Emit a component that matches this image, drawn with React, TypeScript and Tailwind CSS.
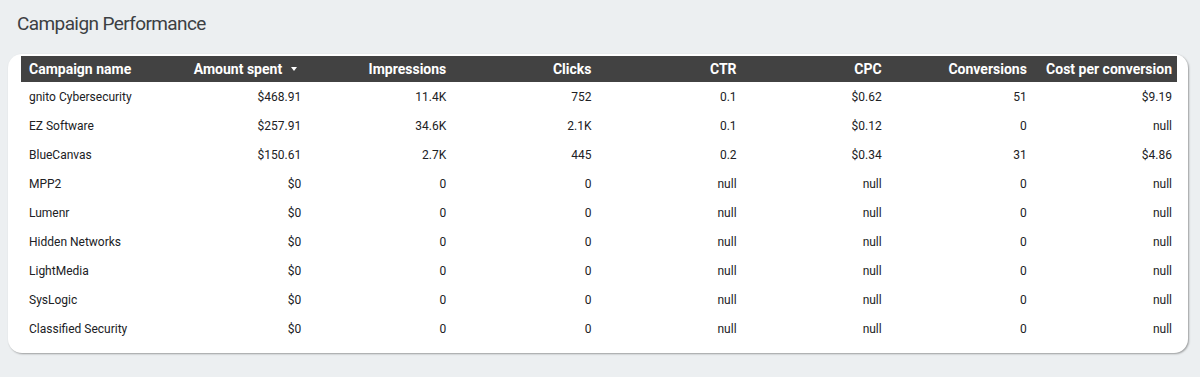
import React from 'react';

type Row = {
  name: string
  spent: string
  impressions: string
  clicks: string
  ctr: string
  cpc: string
  conversions: string
  costPerConversion: string
}

const rows: Row[] = [
  { name: 'gnito Cybersecurity', spent: '$468.91', impressions: '11.4K', clicks: '752', ctr: '0.1', cpc: '$0.62', conversions: '51', costPerConversion: '$9.19' },
  { name: 'EZ Software', spent: '$257.91', impressions: '34.6K', clicks: '2.1K', ctr: '0.1', cpc: '$0.12', conversions: '0', costPerConversion: 'null' },
  { name: 'BlueCanvas', spent: '$150.61', impressions: '2.7K', clicks: '445', ctr: '0.2', cpc: '$0.34', conversions: '31', costPerConversion: '$4.86' },
  { name: 'MPP2', spent: '$0', impressions: '0', clicks: '0', ctr: 'null', cpc: 'null', conversions: '0', costPerConversion: 'null' },
  { name: 'Lumenr', spent: '$0', impressions: '0', clicks: '0', ctr: 'null', cpc: 'null', conversions: '0', costPerConversion: 'null' },
  { name: 'Hidden Networks', spent: '$0', impressions: '0', clicks: '0', ctr: 'null', cpc: 'null', conversions: '0', costPerConversion: 'null' },
  { name: 'LightMedia', spent: '$0', impressions: '0', clicks: '0', ctr: 'null', cpc: 'null', conversions: '0', costPerConversion: 'null' },
  { name: 'SysLogic', spent: '$0', impressions: '0', clicks: '0', ctr: 'null', cpc: 'null', conversions: '0', costPerConversion: 'null' },
  { name: 'Classified Security', spent: '$0', impressions: '0', clicks: '0', ctr: 'null', cpc: 'null', conversions: '0', costPerConversion: 'null' },
]

const headers = ['Impressions', 'Clicks', 'CTR', 'CPC', 'Conversions', 'Cost per conversion']

const gridCols = 'grid grid-cols-[140px_repeat(7,minmax(0,1fr))]'

const App: React.FC = () => {
  return (
    <div className="min-h-screen w-full bg-[#eceff1] font-['Roboto',sans-serif] pt-[12px]">
      <div className="ml-[17px] h-[24px] leading-[24px] text-[19px] tracking-[-0.6px] text-[#3c4043]">Campaign Performance</div>

      <div className="mt-[18px] ml-[8px] mr-[12px] bg-white rounded-[14px] shadow-[1px_1px_2px_rgba(0,0,0,0.35)] pt-[2px] pl-[13px] pr-[11px] pb-[10px]">
        {/* header */}
        <div className={`${gridCols} h-[26px] bg-[#424242] text-white text-[14px] font-bold items-center`}>
          <div className="pl-2 whitespace-nowrap">Campaign name</div>
          <div className="flex items-center justify-end pr-[9px]">
            <span className="whitespace-nowrap">Amount spent</span>
            <svg width="6" height="4" viewBox="0 0 6 4" className="ml-[9px]">
              <path d="M0 0 L6 0 L3 4 Z" fill="white" />
            </svg>
          </div>
          {headers.map((h) => (
            <div key={h} className="text-right pr-[5px] whitespace-nowrap">{h}</div>
          ))}
        </div>

        {/* rows */}
        {rows.map((r) => (
          <div key={r.name} className={`${gridCols} h-[29px] items-center text-[12px] text-[#202124]`}>
            <div className="pl-2 whitespace-nowrap">{r.name}</div>
            <div className="text-right pr-[5px]">{r.spent}</div>
            <div className="text-right pr-[5px]">{r.impressions}</div>
            <div className="text-right pr-[5px]">{r.clicks}</div>
            <div className="text-right pr-[5px]">{r.ctr}</div>
            <div className="text-right pr-[5px]">{r.cpc}</div>
            <div className="text-right pr-[5px]">{r.conversions}</div>
            <div className="text-right pr-[5px]">{r.costPerConversion}</div>
          </div>
        ))}
      </div>
    </div>
  )
}

export default App
